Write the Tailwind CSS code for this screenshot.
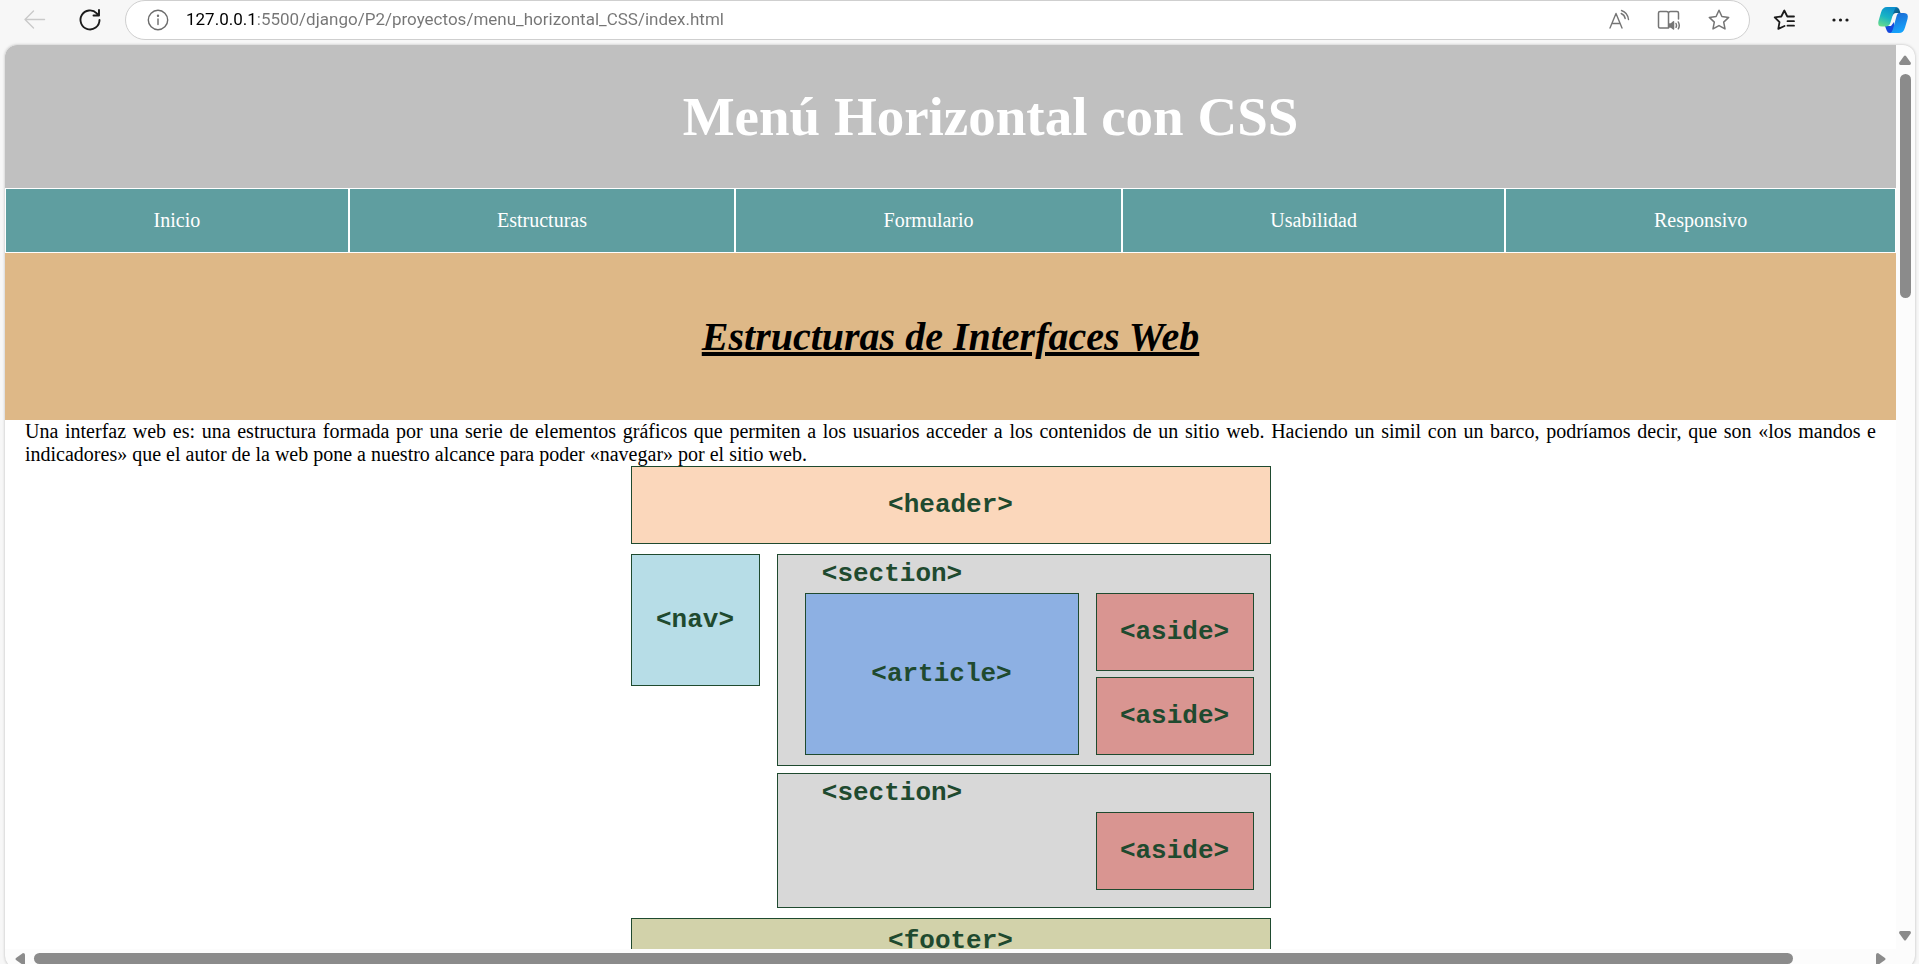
<!DOCTYPE html>
<html lang="es">
<head>
<meta charset="utf-8">
<title>Menú Horizontal con CSS</title>
<script src="https://cdn.jsdelivr.net/npm/@tailwindcss/browser@4"></script>
</head>
<body class="flex h-screen flex-col overflow-hidden bg-[#f7f7f7]">

<!-- Browser toolbar -->
<div class="flex h-[45px] shrink-0 items-start pl-5 pr-2 font-[Roboto,sans-serif]">
  <button type="button" aria-label="Atrás" disabled class="flex h-[39px] w-8 items-center justify-center">
    <svg class="size-6" viewBox="0 0 24 24" fill="none" stroke="#cacaca" stroke-width="1.4" stroke-linecap="round" stroke-linejoin="round"><path d="M20.500 11.500H1M9.500 3L1 11.500L9.500 20"/></svg>
  </button>
  <button type="button" aria-label="Actualizar" class="ml-6 flex h-[39px] w-7 items-center justify-center">
    <svg class="size-6" viewBox="0 0 24 24" fill="none" stroke="#1b1b1b" stroke-width="1.900" stroke-linecap="round" stroke-linejoin="round"><path d="M21.500 12A9.500 9.500 0 1 1 18.800 5.300L21 7.500M21 2V7.500H15.500"/></svg>
  </button>
  <div class="ml-[21px] flex h-10 flex-1 items-center rounded-full border border-[#cfcfcf] bg-white pl-5 pr-[18px]">
    <button type="button" aria-label="Información del sitio" class="flex size-6 items-center justify-center">
      <svg class="size-6" viewBox="0 0 24 24" fill="none" stroke="#6b6b6b" stroke-width="1.400" stroke-linecap="round"><circle cx="12" cy="12" r="9.700"/><path d="M12 11V16.500"/><circle cx="12" cy="7.700" r=".5" fill="#6b6b6b"/></svg>
    </button>
    <input type="text" aria-label="Dirección" value="127.0.0.1:5500/django/P2/proyectos/menu_horizontal_CSS/index.html" class="ml-4 min-w-0 flex-1 bg-linear-to-r from-black from-[71px] to-[#757575] to-[71px] bg-clip-text text-[17px] text-transparent outline-none">
    <div class="flex items-center gap-[26px]">
      <button type="button" aria-label="Leer en voz alta" class="size-6">
        <svg class="size-6" viewBox="0 0 24 24" fill="none" stroke="#757575" stroke-width="1.400" stroke-linecap="round" stroke-linejoin="round"><path d="M3 20L9 5.500L15 20M5 15.500H13M14.200 5.500Q17.500 6.800 18.200 10.500M14.500 2.500Q20.600 4.500 21.500 11.500"/></svg>
      </button>
      <button type="button" aria-label="Lector inmersivo" class="size-6">
        <svg class="size-6" viewBox="0 0 24 24" fill="none" stroke="#757575" stroke-width="1.500" stroke-linecap="round" stroke-linejoin="round"><path d="M11.500 20H3Q1.500 20 1.500 18.500V5Q1.500 3.500 3 3.500H9.500Q11.500 3.500 11.500 5.500Q11.500 3.500 13.500 3.500H20Q21.500 3.500 21.500 5V11M11.500 5.500V20"/><path fill="#757575" d="M12.500 16H14L16.500 13.800V21L14 19H12.500Z"/><path d="M19 15.500Q20 17.400 19 19.300M21.300 14Q23.200 17.400 21.300 20.800"/></svg>
      </button>
      <button type="button" aria-label="Agregar a favoritos" class="size-6">
        <svg class="size-6" viewBox="0 0 24 24" fill="none" stroke="#757575" stroke-width="1.500" stroke-linejoin="round"><path d="M12 2.300L14.900 8.500L21.700 9.400L16.700 14.100L18 20.900L12 17.600L6 20.900L7.300 14.100L2.300 9.400L9.100 8.500Z"/></svg>
      </button>
    </div>
  </div>
  <button type="button" aria-label="Favoritos" class="ml-[23px] flex h-[39px] w-6 items-center justify-center">
    <svg class="size-6" viewBox="0 0 24 24" fill="none" stroke="#1b1b1b" stroke-width="1.800" stroke-linecap="round" stroke-linejoin="round"><path d="M21 8.500H14.300L11.300 2.500L8.300 8.500L1.700 9.400L6.500 14.100L5.300 20.900L11.500 18M14.500 13.200H21M14.500 17.700H21"/></svg>
  </button>
  <button type="button" aria-label="Configuración y más" class="ml-8 flex h-[39px] w-6 items-center justify-center">
    <svg class="size-6" viewBox="0 0 24 24" fill="#1b1b1b"><circle cx="5" cy="12" r="1.600"/><circle cx="11.500" cy="12" r="1.600"/><circle cx="18" cy="12" r="1.600"/></svg>
  </button>
  <button type="button" aria-label="Copilot" class="ml-[22px] flex h-10 w-9 items-center justify-center">
    <svg class="h-8 w-8" viewBox="0 0 32 32">
      <defs>
        <linearGradient id="wingLeft" x1="0.600" y1="0" x2="0.200" y2="1"><stop offset="0" stop-color="#0c8fce"/><stop offset=".5" stop-color="#18b4c4"/><stop offset="1" stop-color="#68dc8b"/></linearGradient>
        <linearGradient id="wingRight" x1="0" y1="0" x2="0.300" y2="1"><stop offset="0" stop-color="#1c65d0"/><stop offset="1" stop-color="#15a2fb"/></linearGradient>
        <linearGradient id="foldTop" x1="0" y1="0" x2="1" y2="1"><stop offset="0" stop-color="#0a84c6"/><stop offset="1" stop-color="#0a4a68"/></linearGradient>
      </defs>
      <path fill="url(#foldTop)" d="M13 3H19Q21.500 3 22.300 5.500L23.500 9H19Q16.500 9 15.500 12L14 8Z"/>
      <path fill="#1548dc" d="M8 22H14L17 18L17.500 25Q17 29 14 29H13Q10.500 29 9.700 26.500Z"/>
      <path fill="url(#wingLeft)" d="M10 3H20Q18 3.500 17 7L13.500 18.500Q12.300 22.500 9 22.500H5Q0 22.500 1.500 17L4 8.500Q5.500 3 10 3Z"/>
      <path fill="url(#wingRight)" d="M22 9H27Q32 9 30.500 15L28 23.500Q26.500 29 22 29H13Q15 28.500 16 25L19.300 13Q20.300 9 22 9Z"/>
    </svg>
  </button>
</div>

<!-- Viewport with scroll bars -->
<div class="-mb-1 ml-[5px] mr-1 grid min-h-0 flex-1 grid-cols-[1fr_19px] grid-rows-[minmax(0,1fr)_19px] overflow-hidden rounded-xl bg-[#fcfcfc] shadow-[0_0_3px_rgba(0,0,0,0.25)]">
  <div class="min-w-0 overflow-hidden bg-white font-['Liberation_Serif',serif] text-xl leading-[23px] text-black">
    <header class="bg-[#c0c0c0] py-10 pl-20 text-center">
      <h1 class="text-[55px] leading-[63px] font-bold text-white">Menú Horizontal con CSS</h1>
    </header>
    <nav class="border border-white bg-white text-center text-white">
      <ul class="grid grid-cols-[343fr_386fr_386fr_383fr_390fr] gap-0.5">
        <li><a href="#inicio" class="block bg-[#5f9ea0] py-5">Inicio</a></li>
        <li><a href="#estructuras" class="block bg-[#5f9ea0] py-5">Estructuras</a></li>
        <li><a href="#formulario" class="block bg-[#5f9ea0] py-5">Formulario</a></li>
        <li><a href="#usabilidad" class="block bg-[#5f9ea0] py-5">Usabilidad</a></li>
        <li><a href="#responsivo" class="block bg-[#5f9ea0] py-5">Responsivo</a></li>
      </ul>
    </nav>
    <main>
      <div class="bg-[#deb887] py-[60px] text-center">
        <h2 class="text-[40px] leading-[47px] font-bold italic underline">Estructuras de Interfaces Web</h2>
      </div>
      <p class="px-5 text-justify">Una interfaz web es: una estructura formada por una serie de elementos gráficos que permiten a los usuarios acceder a los contenidos de un sitio web. Haciendo un simil con un barco, podríamos decir, que son «los mandos e indicadores» que el autor de la web pone a nuestro alcance para poder «navegar» por el sitio web.</p>

      <!-- Layout diagram -->
      <figure class="mx-auto flex w-[640px] flex-col gap-2.5 font-['Liberation_Mono',monospace] text-[26px] leading-6 font-bold text-[#1f4a2f]">
        <div class="flex h-[78px] items-center justify-center border border-[#1f4a2f] bg-[#fbd7bb]">&lt;header&gt;</div>
        <div class="flex items-start justify-between">
          <div class="flex h-[132px] w-[129px] items-center justify-center border border-[#1f4a2f] bg-[#b7dde7]">&lt;nav&gt;</div>
          <div class="flex w-[494px] flex-col gap-[7px]">
            <div class="border border-[#1f4a2f] bg-[#d8d8d8] pr-4 pb-2.5 pl-[27px]">
              <div class="flex h-[38px] w-[175px] items-center justify-center">&lt;section&gt;</div>
              <div class="flex justify-between">
                <div class="flex h-[162px] w-[274px] items-center justify-center border border-[#1f4a2f] bg-[#8db0e3]">&lt;article&gt;</div>
                <div class="flex w-[158px] flex-col justify-between">
                  <div class="flex h-[78px] items-center justify-center border border-[#1f4a2f] bg-[#d99591]">&lt;aside&gt;</div>
                  <div class="flex h-[78px] items-center justify-center border border-[#1f4a2f] bg-[#d99591]">&lt;aside&gt;</div>
                </div>
              </div>
            </div>
            <div class="border border-[#1f4a2f] bg-[#d8d8d8] pr-4 pb-[17px] pl-[27px]">
              <div class="flex h-[38px] w-[175px] items-center justify-center">&lt;section&gt;</div>
              <div class="ml-auto flex h-[78px] w-[158px] items-center justify-center border border-[#1f4a2f] bg-[#d99591]">&lt;aside&gt;</div>
            </div>
          </div>
        </div>
        <div class="flex h-11 items-center justify-center border border-b-0 border-[#1f4a2f] bg-[#d2d2aa]">&lt;footer&gt;</div>
      </figure>
    </main>
  </div>

  <!-- Vertical scroll bar -->
  <div class="flex flex-col items-center pr-px pt-2.5 pb-2">
    <svg class="h-2.5 w-3" viewBox="0 0 12 10" fill="#8b8b8b"><path d="M5 1Q6 0 7 1L12 8Q12 10 10.500 10H1.500Q0 10 0 8Z"/></svg>
    <div class="mt-[9px] h-56 w-[11px] rounded-full bg-[#8b8b8b]"></div>
    <svg class="mt-auto h-2.5 w-3" viewBox="0 0 12 10" fill="#8b8b8b"><path d="M5 9Q6 10 7 9L12 2Q12 0 10.500 0H1.500Q0 0 0 2Z"/></svg>
  </div>

  <!-- Horizontal scroll bar -->
  <div class="flex items-center px-2.5">
    <svg class="h-3 w-2.5" viewBox="0 0 10 12" fill="#8b8b8b"><path d="M1 5Q0 6 1 7L8 12Q10 12 10 10.500V1.500Q10 0 8 0Z"/></svg>
    <div class="mr-[83px] ml-[9px] h-[11px] flex-1 rounded-full bg-[#8b8b8b]"></div>
    <svg class="h-3 w-2.5" viewBox="0 0 10 12" fill="#8b8b8b"><path d="M9 5Q10 6 9 7L2 12Q0 12 0 10.500V1.500Q0 0 2 0Z"/></svg>
  </div>
</div>
</body>
</html>
